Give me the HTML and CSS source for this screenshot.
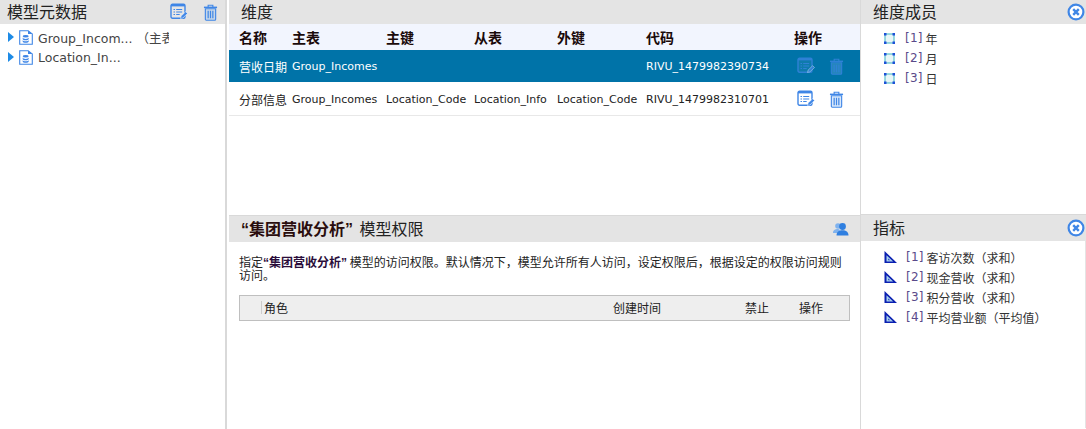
FILE: index.html
```html
<!DOCTYPE html>
<html lang="zh">
<head>
<meta charset="utf-8">
<title>模型</title>
<link rel="stylesheet" href="styles.css">
</head>
<body>
<svg class="defs" width="0" height="0">
  <defs>
    <symbol id="i-edit" viewBox="0 0 18 18">
      <rect x="1" y="1.2" width="14" height="14" rx="1.5" fill="#fff" fill-opacity=".08" stroke="#3f86e6" stroke-width="1.4"/>
      <rect x="1" y="1.2" width="14" height="2.2" fill="#3f86e6"/>
      <path d="M3.5 6.5h1.5M6.2 6.5h6M3.5 9h1.5M6.2 9h6M3.5 11.5h1.5M6.2 11.5h3.5" stroke="#3f86e6" stroke-width="1"/>
      <path d="M10.5 15.5l.6-2.4 4.6-4.4 1.8 1.8-4.6 4.4z" fill="#3f86e6" stroke="#fff" stroke-width=".5"/>
    </symbol>
    <symbol id="i-trash" viewBox="0 0 16 18">
      <path d="M1 3.5h14" stroke="#3f86e6" stroke-width="1.6"/>
      <path d="M5.5 3V1.2h5V3" fill="none" stroke="#3f86e6" stroke-width="1.2"/>
      <path d="M2.5 5h11v11.2a1 1 0 0 1-1 1h-9a1 1 0 0 1-1-1z" fill="#8fbcf3" fill-opacity=".35" stroke="#3f86e6" stroke-width="1.2"/>
      <path d="M5.5 7v8M8 7v8M10.5 7v8" stroke="#3f86e6" stroke-width="1.3"/>
    </symbol>
    <symbol id="i-close" viewBox="0 0 18 18">
      <circle cx="9" cy="9" r="7.4" fill="#fff" stroke="#3f86e6" stroke-width="2.2"/>
      <path d="M6.2 6.2l5.6 5.6M11.8 6.2l-5.6 5.6" stroke="#3f86e6" stroke-width="2.4"/>
    </symbol>
    <symbol id="i-file" viewBox="0 0 14 15">
      <path d="M.7.7h8.4l4.2 3.2v10.4H.7z" fill="#fff" stroke="#3f86e6" stroke-width="1.1"/>
      <path d="M9 .5l4.5 3.5H9z" fill="#3f86e6"/>
      <ellipse cx="6.7" cy="6.3" rx="3" ry="1.3" fill="#3f86e6"/>
      <path d="M3.700 7.600c0 1.700 6 1.700 6 0v1.400c0 1.700-6 1.700-6 0zM3.700 10c0 1.700 6 1.700 6 0v1.400c0 1.700-6 1.700-6 0z" fill="#3f86e6"/>
    </symbol>
    <symbol id="i-dim" viewBox="0 0 11 11">
      <rect x="1" y="1" width="9" height="9" fill="#e8f6f7" stroke="#3fb5c4"/>
      <path d="M0 0h2.500v2.500H0zM8.500 0h2.500v2.500H8.500zM0 8.500h2.500v2.500H0zM8.500 8.500h2.500v2.500H8.500z" fill="#1d50d8"/>
    </symbol>
    <symbol id="i-measure" viewBox="0 0 13 12">
      <path d="M.5 0L13 12H.5z" fill="#0a1fb0"/>
      <path d="M2.500 4.200L9.200 10.500H2.500z" fill="#a9d2ee"/>
      <path d="M4.300 7.500L6 9.200H4.300z" fill="#0a1fb0"/>
    </symbol>
    <symbol id="i-user" viewBox="0 0 16 14">
      <circle cx="5" cy="4" r="2.800" fill="#7fb2ee"/>
      <path d="M0 11c0-3 2-4 5-4 1.500 0 2 1 2 3v1z" fill="#7fb2ee"/>
      <circle cx="9.500" cy="4.500" r="3.400" fill="#2f7fe0"/>
      <path d="M3.500 13.500c0-3.500 2.500-5.200 6-5.200s6 1.700 6 5.200z" fill="#2f7fe0"/>
    </symbol>
  </defs>
</svg>

<div class="app">
  <aside class="left">
    <header class="bar">
      <h2 class="title">模型元数据</h2>
      <div class="tools">
        <svg class="ic-edit"><use href="#i-edit"/></svg>
        <svg class="ic-trash"><use href="#i-trash"/></svg>
      </div>
    </header>
    <ul class="tree">
      <li class="node">
        <span class="arrow"></span>
        <svg class="ic-file"><use href="#i-file"/></svg>
        <span class="node-text">Group_Incom... （主表</span>
      </li>
      <li class="node">
        <span class="arrow"></span>
        <svg class="ic-file"><use href="#i-file"/></svg>
        <span class="node-text">Location_In...</span>
      </li>
    </ul>
  </aside>

  <main class="center">
    <section class="dims">
      <header class="bar bar-center"><h2 class="title">维度</h2></header>
      <table class="grid">
        <colgroup>
          <col class="c1"><col class="c2"><col class="c3"><col class="c4"><col class="c5"><col class="c6"><col class="c7">
        </colgroup>
        <thead>
          <tr><th>名称</th><th>主表</th><th>主键</th><th>从表</th><th>外键</th><th>代码</th><th>操作</th></tr>
        </thead>
        <tbody>
          <tr class="selected">
            <td class="cjk">营收日期</td><td>Group_Incomes</td><td></td><td></td><td></td><td>RIVU_1479982390734</td>
            <td class="ops"><svg class="ic-edit"><use href="#i-edit"/></svg><svg class="ic-trash"><use href="#i-trash"/></svg></td>
          </tr>
          <tr class="plain">
            <td class="cjk">分部信息</td><td>Group_Incomes</td><td>Location_Code</td><td>Location_Info</td><td>Location_Code</td><td>RIVU_1479982310701</td>
            <td class="ops"><svg class="ic-edit"><use href="#i-edit"/></svg><svg class="ic-trash"><use href="#i-trash"/></svg></td>
          </tr>
        </tbody>
      </table>
    </section>

    <section class="perm">
      <header class="bar bar-center">
        <h2 class="title"><b class="q">“集团营收分析”</b> 模型权限</h2>
        <svg class="ic-user"><use href="#i-user"/></svg>
      </header>
      <p class="desc">指定<b class="q2">“集团营收分析”</b> 模型的访问权限。默认情况下，模型允许所有人访问，设定权限后，根据设定的权限访问规则访问。</p>
      <div class="role-head">
        <span class="rh-role">角色</span>
        <span class="rh-time">创建时间</span>
        <span class="rh-ban">禁止</span>
        <span class="rh-op">操作</span>
      </div>
    </section>
  </main>

  <aside class="right">
    <section class="members">
      <header class="bar bar-right">
        <h2 class="title">维度成员</h2>
        <svg class="ic-close"><use href="#i-close"/></svg>
      </header>
      <ul class="list">
        <li class="item"><svg class="ic-dim"><use href="#i-dim"/></svg><span class="idx">[1]</span> 年</li>
        <li class="item"><svg class="ic-dim"><use href="#i-dim"/></svg><span class="idx">[2]</span> 月</li>
        <li class="item"><svg class="ic-dim"><use href="#i-dim"/></svg><span class="idx">[3]</span> 日</li>
      </ul>
    </section>
    <section class="measures">
      <header class="bar bar-right">
        <h2 class="title">指标</h2>
        <svg class="ic-close"><use href="#i-close"/></svg>
      </header>
      <ul class="list">
        <li class="item"><svg class="ic-measure"><use href="#i-measure"/></svg><span class="idx">[1]</span> 客访次数（求和）</li>
        <li class="item"><svg class="ic-measure"><use href="#i-measure"/></svg><span class="idx">[2]</span> 现金营收（求和）</li>
        <li class="item"><svg class="ic-measure"><use href="#i-measure"/></svg><span class="idx">[3]</span> 积分营收（求和）</li>
        <li class="item"><svg class="ic-measure"><use href="#i-measure"/></svg><span class="idx">[4]</span> 平均营业额（平均值）</li>
      </ul>
    </section>
  </aside>
</div>
</body>
</html>
```

FILE: styles.css
```css
* { box-sizing: border-box; }
html, body { margin: 0; height: 100%; overflow: hidden; }
body {
  background: #fff;
  color: #222;
  font-family: "DejaVu Sans", "Noto Sans CJK SC", sans-serif;
  font-size: 11px;
}
.defs { position: absolute; }
ul { list-style: none; margin: 0; padding: 0; }
svg { display: block; flex: none; }

.app { display: flex; width: 1086px; height: 429px; }

.left { width: 226px; border-right: 1px solid #d9d9d9; flex: none; }
.center { width: 635px; flex: none; padding-left: 2px; border-left: 1px solid #d9d9d9; border-right: 1px solid #d9d9d9; display: flex; flex-direction: column; }
.right { flex: 1; display: flex; flex-direction: column; }

.bar {
  height: 24px;
  background: #e4e4e4;
  display: flex;
  align-items: center;
  justify-content: space-between;
  padding-left: 7px;
}
.bar-center { padding-left: 12px; padding-right: 11px; }
.bar-right { padding-left: 12px; padding-right: 1px; }
.title { margin: -2px 0 0; font-weight: 400; font-size: 16px; color: #222; font-family: "Noto Sans CJK SC", sans-serif; line-height: 24px; }

.tools { display: flex; align-items: center; gap: 15px; padding-right: 7px; }
.ic-edit { width: 18px; height: 18px; }
.ic-trash { width: 15px; height: 17px; }
.ic-close { width: 18px; height: 18px; }
.ic-file { width: 14px; height: 15px; }
.ic-dim { width: 11px; height: 11px; margin-left: 1px; }
.ic-measure { width: 13px; height: 12px; }
.ic-user { width: 16px; height: 14px; }

.tree { padding-top: 3px; }
.node { height: 20px; display: flex; align-items: center; padding-left: 8px; color: #444; white-space: nowrap; overflow: hidden; }
.arrow { width: 0; height: 0; border-left: 6px solid #1e8be6; border-top: 5px solid transparent; border-bottom: 5px solid transparent; margin-right: 5px; }
.node-text { margin-left: 5px; width: 131px; overflow: hidden; font-size: 12.5px; }

.dims { height: 215px; }
.grid { width: 631px; border-collapse: collapse; table-layout: fixed; }
.c1 { width: 63px; } .c2 { width: 94px; } .c3 { width: 88px; } .c4 { width: 83px; } .c5 { width: 89px; } .c6 { width: 148px; } .c7 { width: 66px; }
.grid th {
  height: 26px; background: #f2f5fe; text-align: left; padding: 0;
  font-size: 14px; font-weight: 700; color: #1a0a0a; font-family: "Noto Sans CJK SC", sans-serif;
}
.grid th:first-child, .grid td:first-child { padding-left: 10px; }
.grid td { height: 33px; padding: 0; border-bottom: 1px solid #e8e8e8; white-space: nowrap; color: #222; }
.grid .plain td { padding-top: 2px; }
.grid .selected td { height: 32px; background: #0073a8; color: #fff; border-bottom: 0; }
.grid .cjk { font-family: "Noto Sans CJK SC", sans-serif; font-size: 12px; }
.ops svg { display: inline-block; vertical-align: middle; }
.ops .ic-edit { margin-left: 3px; margin-right: 14px; }
.selected .ops svg { opacity: .75; }

.perm { flex: 1; border-top: 1px solid #d9d9d9; }
.perm .bar { height: 26px; }
.q, .q2 { font-family: "Liberation Sans", "Noto Sans CJK SC", sans-serif; font-weight: 700; line-height: 0; }
.q { color: #2a0d0d; margin-right: 3px; }
.q2 { color: #2a0d3a; }
.desc { margin: 0; padding: 13px 8px 0 10px; font-family: "Noto Sans CJK SC", sans-serif; font-size: 12px; line-height: 13px; height: 53px; color: #222; }
.role-head {
  display: flex; align-items: center; height: 26px; width: 611px; margin-left: 10px; padding-bottom: 1px;
  background: #eee; border: 1px solid #bfbfbf; font-family: "Noto Sans CJK SC", sans-serif; font-size: 12px;
}
.rh-role { margin-left: 21px; padding-left: 2px; border-left: 1px solid #ccc; line-height: 13px; width: 352px; }
.rh-time { width: 132px; }
.rh-ban { width: 54px; }

.members { height: 215px; border-bottom: 1px solid #d9d9d9; }
.measures { flex: 1; }
.measures .bar { height: 26px; }
.list { padding-top: 4px; }
.members .list { padding-left: 22px; }
.measures .list { padding-left: 23px; padding-top: 6px; border-right: 1px solid #e4e4e4; height: 187px; }
.item { height: 20px; display: flex; align-items: center; font-family: "Noto Sans CJK SC", sans-serif; font-size: 12px; color: #333; white-space: pre; }
.idx { font-family: "DejaVu Sans", sans-serif; font-size: 12px; letter-spacing: .25px; color: #5a4a8a; margin-left: 9px; }
.members .idx { margin-left: 10px; }
```
